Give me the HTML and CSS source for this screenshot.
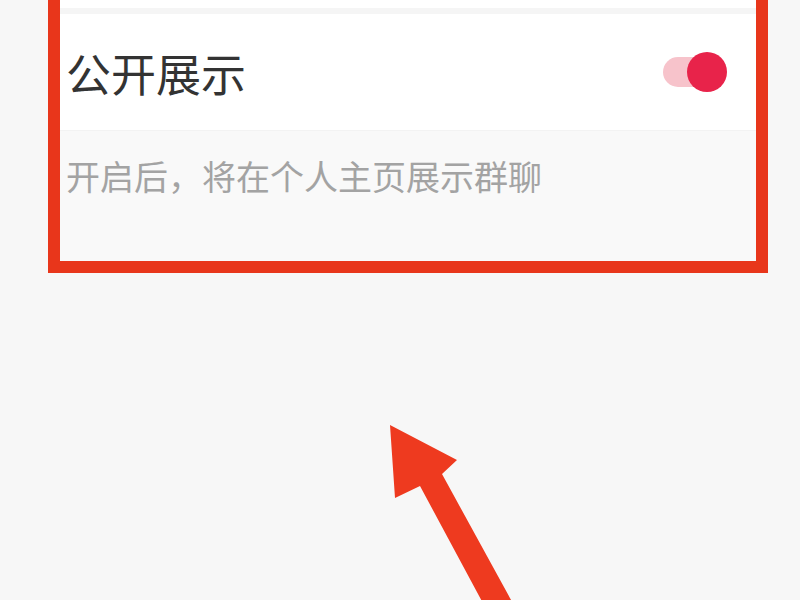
FILE: index.html
```html
<!DOCTYPE html>
<html lang="zh">
<head>
<meta charset="utf-8">
<link rel="stylesheet" href="styles.css">
</head>
<body>
<div class="frame">
  <div class="prev-row"></div>
  <div class="row">
    <span class="title">公开展示</span>
    <span class="toggle"><span class="track"></span><span class="knob"></span></span>
  </div>
  <div class="desc">开启后，将在个人主页展示群聊</div>
</div>
<svg class="arrow" width="800" height="600" viewBox="0 0 800 600">
  <polygon points="390,425 457,460 442,474 522,620 492,620 420,486 395,498" fill="#ee3a1f"/>
</svg>
</body>
</html>
```
FILE: styles.css
```css
html, body {
  margin: 0;
  padding: 0;
  background: #f7f7f7;
  width: 800px;
  height: 600px;
  overflow: hidden;
  font-family: "Noto Sans CJK SC", "Noto Sans", sans-serif;
}
.frame {
  box-sizing: border-box;
  margin-left: 48px;
  width: 720px;
  height: 273px;
  border: 12px solid #e8361b;
  border-top: none;
  background: #f9f9f9;
  display: flex;
  flex-direction: column;
}
.prev-row {
  height: 8px;
  background: #ffffff;
  border-bottom: 6px solid #f5f5f5;
}
.row {
  height: 116px;
  background: #ffffff;
  display: flex;
  align-items: center;
  justify-content: space-between;
  padding: 0 29px 0 6px;
  border-bottom: 1px solid #f3f3f3;
}
.title {
  font-size: 45px;
  color: #333333;
  line-height: 1;
}
.toggle {
  position: relative;
  width: 64px;
  height: 40px;
  display: block;
}
.track {
  position: absolute;
  left: 0;
  top: 5px;
  width: 46px;
  height: 30px;
  border-radius: 15px;
  background: #f7c3cb;
}
.knob {
  position: absolute;
  right: 0;
  top: 0;
  width: 40px;
  height: 40px;
  border-radius: 50%;
  background: #e8234a;
}
.desc {
  padding: 25px 0 0 6px;
  font-size: 34px;
  line-height: 40px;
  color: #a3a3a3;
}
.arrow {
  position: absolute;
  left: 0;
  top: 0;
}
```
